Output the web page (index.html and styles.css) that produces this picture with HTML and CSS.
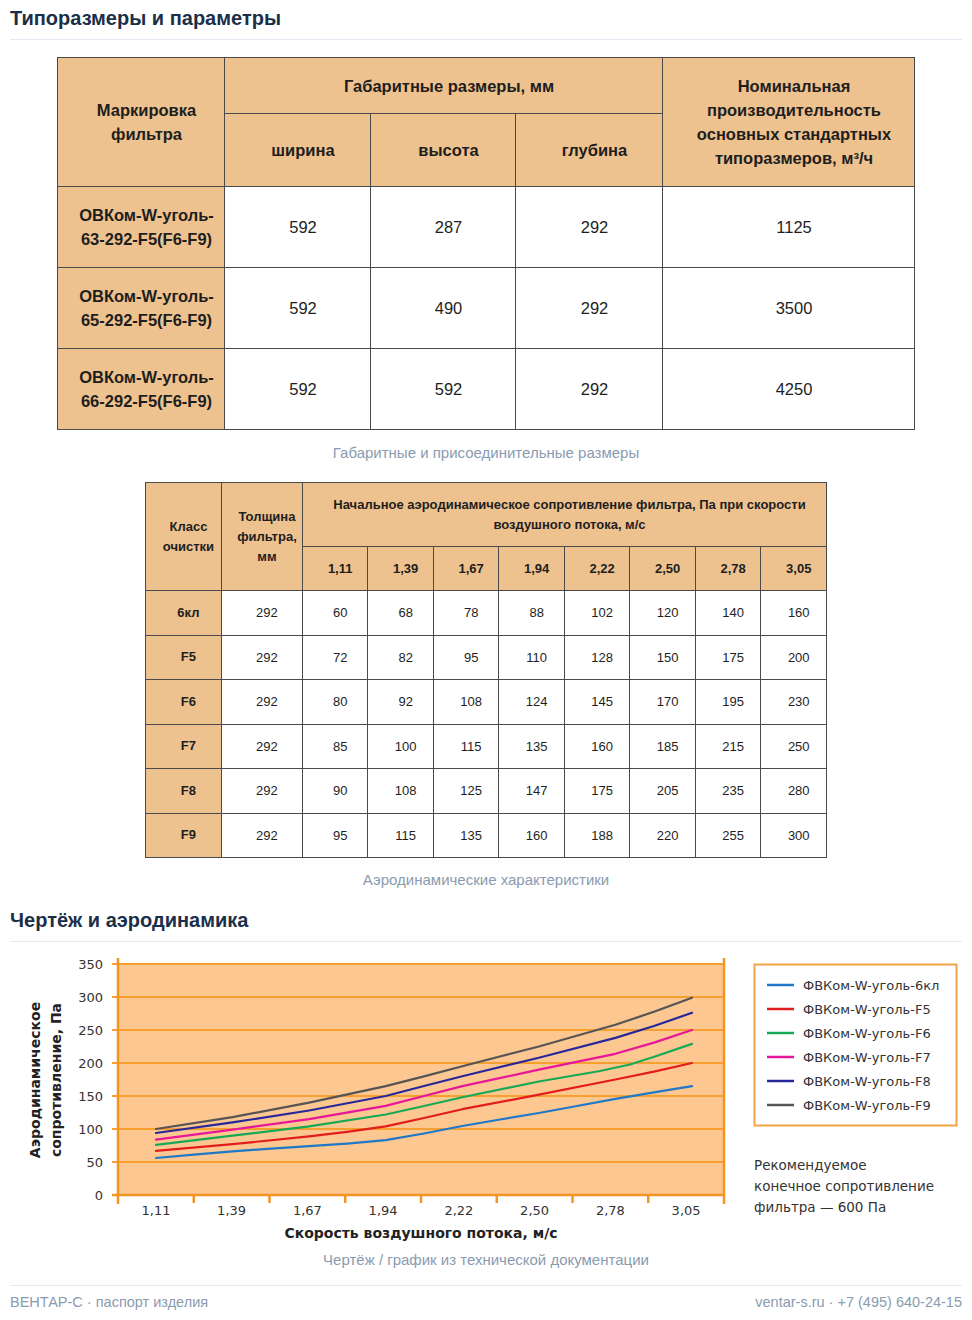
FILE: index.html
```html
<!DOCTYPE html>
<html lang="ru">
<head>
<meta charset="utf-8">
<title>Типоразмеры и параметры</title>
<link rel="stylesheet" href="styles.css">
</head>
<body>
<main class="page">
  <h2 class="sec-title">Типоразмеры и параметры</h2>

  <figure class="fig fig-t1">
    <table class="t1">
      <colgroup>
        <col class="t1-c1"><col class="t1-c2"><col class="t1-c3"><col class="t1-c4"><col class="t1-c5">
      </colgroup>
      <thead>
        <tr class="t1-h1">
          <th rowspan="2">Маркировка<br>фильтра</th>
          <th colspan="3">Габаритные размеры, мм</th>
          <th rowspan="2">Номинальная<br>производительность<br>основных стандартных<br>типоразмеров, м³/ч</th>
        </tr>
        <tr class="t1-h2">
          <th>ширина</th><th>высота</th><th>глубина</th>
        </tr>
      </thead>
      <tbody>
        <tr><th>ОВКом-W-уголь-<br>63-292-F5(F6-F9)</th><td>592</td><td>287</td><td>292</td><td>1125</td></tr>
        <tr><th>ОВКом-W-уголь-<br>65-292-F5(F6-F9)</th><td>592</td><td>490</td><td>292</td><td>3500</td></tr>
        <tr><th>ОВКом-W-уголь-<br>66-292-F5(F6-F9)</th><td>592</td><td>592</td><td>292</td><td>4250</td></tr>
      </tbody>
    </table>
    <figcaption class="cap">Габаритные и присоединительные размеры</figcaption>
  </figure>

  <figure class="fig fig-t2">
    <table class="t2">
      <colgroup>
        <col class="t2-c1"><col class="t2-c2"><col class="t2-v"><col class="t2-v"><col class="t2-v"><col class="t2-v"><col class="t2-v"><col class="t2-v"><col class="t2-v"><col class="t2-v">
      </colgroup>
      <thead>
        <tr class="t2-h1">
          <th rowspan="2">Класс<br>очистки</th>
          <th rowspan="2">Толщина<br>фильтра,<br>мм</th>
          <th colspan="8">Начальное аэродинамическое сопротивление фильтра, Па при скорости<br>воздушного потока, м/с</th>
        </tr>
        <tr class="t2-h2">
          <th>1,11</th><th>1,39</th><th>1,67</th><th>1,94</th><th>2,22</th><th>2,50</th><th>2,78</th><th>3,05</th>
        </tr>
      </thead>
      <tbody>
        <tr><th>6кл</th><td>292</td><td>60</td><td>68</td><td>78</td><td>88</td><td>102</td><td>120</td><td>140</td><td>160</td></tr>
        <tr><th>F5</th><td>292</td><td>72</td><td>82</td><td>95</td><td>110</td><td>128</td><td>150</td><td>175</td><td>200</td></tr>
        <tr><th>F6</th><td>292</td><td>80</td><td>92</td><td>108</td><td>124</td><td>145</td><td>170</td><td>195</td><td>230</td></tr>
        <tr><th>F7</th><td>292</td><td>85</td><td>100</td><td>115</td><td>135</td><td>160</td><td>185</td><td>215</td><td>250</td></tr>
        <tr><th>F8</th><td>292</td><td>90</td><td>108</td><td>125</td><td>147</td><td>175</td><td>205</td><td>235</td><td>280</td></tr>
        <tr><th>F9</th><td>292</td><td>95</td><td>115</td><td>135</td><td>160</td><td>188</td><td>220</td><td>255</td><td>300</td></tr>
      </tbody>
    </table>
    <figcaption class="cap">Аэродинамические характеристики</figcaption>
  </figure>

  <h2 class="sec-title sec-title-2">Чертёж и аэродинамика</h2>

  <figure class="fig fig-chart">
    <svg class="chart" width="952" height="306" viewBox="10 942 952 306" xmlns="http://www.w3.org/2000/svg">
      <rect x="118" y="964" width="606" height="231" fill="#fdc791"/>
      <g stroke="#f7a030" stroke-width="2">
        <line x1="112" y1="964" x2="724" y2="964"/>
        <line x1="112" y1="997" x2="724" y2="997"/>
        <line x1="112" y1="1030" x2="724" y2="1030"/>
        <line x1="112" y1="1063" x2="724" y2="1063"/>
        <line x1="112" y1="1096" x2="724" y2="1096"/>
        <line x1="112" y1="1129" x2="724" y2="1129"/>
        <line x1="112" y1="1162" x2="724" y2="1162"/>
      </g>
      <g stroke="#f39524" stroke-width="2.5">
        <line x1="118" y1="958" x2="118" y2="1204"/>
        <line x1="724" y1="958" x2="724" y2="1204"/>
        <line x1="112" y1="1195" x2="724" y2="1195"/>
        <line x1="193.75" y1="1195" x2="193.75" y2="1203"/>
        <line x1="269.5" y1="1195" x2="269.5" y2="1203"/>
        <line x1="345.25" y1="1195" x2="345.25" y2="1203"/>
        <line x1="421" y1="1195" x2="421" y2="1203"/>
        <line x1="496.75" y1="1195" x2="496.75" y2="1203"/>
        <line x1="572.5" y1="1195" x2="572.5" y2="1203"/>
        <line x1="648.25" y1="1195" x2="648.25" y2="1203"/>
      </g>
      <g fill="none" stroke-width="2.2" stroke-linejoin="round" stroke-linecap="round">
        <polyline stroke="#1f78c8" points="156,1158 194,1154.6 232.6,1151.4 271,1148.6 309.1,1146.2 347,1143.6 385.7,1140.2 424,1133.5 462.3,1126 500,1119.5 538.9,1113 577,1106 615.4,1098.8 654,1092.4 692,1086.1"/>
        <polyline stroke="#e11d1d" points="156,1150.8 232.6,1144.2 309.1,1136.3 347,1131.8 385.7,1126.4 424,1118 462.3,1109.2 538.9,1094.7 615.4,1079.5 654,1071.6 692,1063"/>
        <polyline stroke="#18a957" points="156,1144.8 232.6,1135.6 309.1,1126.4 385.7,1114.5 424,1106 462.3,1097.3 538.9,1081.5 600,1071 630,1064.5 655,1056.5 692,1043.9"/>
        <polyline stroke="#e8179a" points="156,1139.6 232.6,1129.7 309.1,1119.1 385.7,1105.9 424,1096 462.3,1086.1 538.9,1069.6 615.4,1053.8 654,1042.6 692,1030"/>
        <polyline stroke="#27279a" points="156,1133 232.6,1122.4 309.1,1110.5 385.7,1096 424,1086 462.3,1076.2 538.9,1057.7 615.4,1037.9 654,1026 692,1012.8"/>
        <polyline stroke="#555555" points="156,1129 232.6,1117.1 309.1,1102.6 385.7,1086.1 424,1076.4 462.3,1066.3 538.9,1046.5 615.4,1024.7 654,1011.8 692,997.7"/>
      </g>
      <g class="ax-lbl" text-anchor="end">
        <text x="103" y="969">350</text>
        <text x="103" y="1002">300</text>
        <text x="103" y="1035">250</text>
        <text x="103" y="1068">200</text>
        <text x="103" y="1101">150</text>
        <text x="103" y="1134">100</text>
        <text x="103" y="1167">50</text>
        <text x="103" y="1200">0</text>
      </g>
      <g class="ax-lbl" text-anchor="middle">
        <text x="156" y="1215">1,11</text>
        <text x="231.6" y="1215">1,39</text>
        <text x="307.4" y="1215">1,67</text>
        <text x="383.1" y="1215">1,94</text>
        <text x="458.9" y="1215">2,22</text>
        <text x="534.6" y="1215">2,50</text>
        <text x="610.4" y="1215">2,78</text>
        <text x="686.1" y="1215">3,05</text>
      </g>
      <text class="ax-title" x="421" y="1238" text-anchor="middle">Скорость воздушного потока, м/с</text>
      <g class="ax-title" text-anchor="middle">
        <text transform="translate(40 1080) rotate(-90)">Аэродинамическое</text>
        <text transform="translate(61 1080) rotate(-90)">сопротивление, Па</text>
      </g>
      <rect x="754.5" y="964.5" width="202" height="161" fill="#ffffff" stroke="#f5a445" stroke-width="2"/>
      <g stroke-width="2.5">
        <line x1="767" y1="985" x2="794" y2="985" stroke="#1f78c8"/>
        <line x1="767" y1="1009" x2="794" y2="1009" stroke="#e11d1d"/>
        <line x1="767" y1="1033" x2="794" y2="1033" stroke="#18a957"/>
        <line x1="767" y1="1057" x2="794" y2="1057" stroke="#e8179a"/>
        <line x1="767" y1="1081" x2="794" y2="1081" stroke="#27279a"/>
        <line x1="767" y1="1105" x2="794" y2="1105" stroke="#555555"/>
      </g>
      <g class="leg">
        <text x="803" y="990">ФВКом-W-уголь-6кл</text>
        <text x="803" y="1014">ФВКом-W-уголь-F5</text>
        <text x="803" y="1038">ФВКом-W-уголь-F6</text>
        <text x="803" y="1062">ФВКом-W-уголь-F7</text>
        <text x="803" y="1086">ФВКом-W-уголь-F8</text>
        <text x="803" y="1110">ФВКом-W-уголь-F9</text>
      </g>
      <g class="note">
        <text x="754" y="1170">Рекомендуемое</text>
        <text x="754" y="1191">конечное сопротивление</text>
        <text x="754" y="1212">фильтра — 600 Па</text>
      </g>
    </svg>
    <figcaption class="cap cap-chart">Чертёж / график из технической документации</figcaption>
  </figure>

  <footer class="foot">
    <span>ВЕНТАР-С · паспорт изделия</span>
    <span>ventar-s.ru · +7 (495) 640-24-15</span>
  </footer>
</main>
</body>
</html>
```

FILE: styles.css
```css
* { box-sizing: border-box; }
html, body { margin: 0; padding: 0; background: #ffffff; }
body { font-family: "Liberation Sans", Arial, sans-serif; color: #222222; }

.page { width: 972px; padding: 0 10px; }

.sec-title {
  margin: 0;
  padding: 7px 0 10px;
  font-size: 20px;
  line-height: 22px;
  font-weight: 700;
  color: #1b2f49;
  border-bottom: 1px solid #e2eaf3;
}
.sec-title-2 { margin-top: 13px; }

.fig { margin: 0; display: flex; flex-direction: column; align-items: center; }
.fig-t1 { margin-top: 17px; }
.fig-t2 { margin-top: 20px; }

table { border-collapse: collapse; table-layout: fixed; }

.t1 { width: 857px; }
.t1-c1 { width: 167px; }
.t1-c2 { width: 146px; }
.t1-c3 { width: 145px; }
.t1-c4 { width: 147px; }
.t1-c5 { width: 252px; }
.t1 th, .t1 td {
  border: 1px solid #4a4a4a;
  text-align: center;
  vertical-align: middle;
  padding: 0 0 0 11px;
  color: #1e1e1e;
}
.t1 th { background: #eec28e; font-weight: 700; font-size: 16.5px; line-height: 24px; }
.t1 td { font-size: 16.5px; }
.t1-h1 { height: 56px; }
.t1-h2 { height: 73px; }
.t1 tbody tr { height: 81px; }

.t2 { width: 681px; }
.t2-c1 { width: 76px; }
.t2-c2 { width: 81px; }
.t2-v { width: 65.5px; }
.t2 th, .t2 td {
  border: 1px solid #4a4a4a;
  text-align: center;
  vertical-align: middle;
  padding: 0 0 0 10px;
  color: #1e1e1e;
}
.t2 th { background: #eec28e; font-weight: 700; font-size: 13px; line-height: 20px; }
.t2 td { font-size: 13px; }
.t2-h1 { height: 64px; }
.t2-h2 { height: 44px; }
.t2 tbody tr { height: 44.5px; }

.cap {
  margin-top: 14px;
  font-size: 15px;
  line-height: 18px;
  color: #8a9bb0;
}
.fig-t2 .cap { margin-top: 13px; }
.fig-chart { margin-top: 0; }
.chart { display: block; }
.cap-chart { margin-top: 3px; }

.ax-lbl { font-family: "DejaVu Sans", sans-serif; font-size: 13px; fill: #333333; }
.ax-title { font-family: "DejaVu Sans", sans-serif; font-size: 14px; font-weight: 700; fill: #222222; }
.leg { font-family: "DejaVu Sans", sans-serif; font-size: 13px; fill: #333333; }
.note { font-family: "DejaVu Sans", sans-serif; font-size: 13.5px; fill: #333333; }

.foot {
  margin-top: 16px;
  border-top: 1px solid #e2eaf3;
  padding-top: 7px;
  display: flex;
  justify-content: space-between;
  font-size: 14.5px;
  line-height: 18px;
  color: #8a9bb0;
}
```
